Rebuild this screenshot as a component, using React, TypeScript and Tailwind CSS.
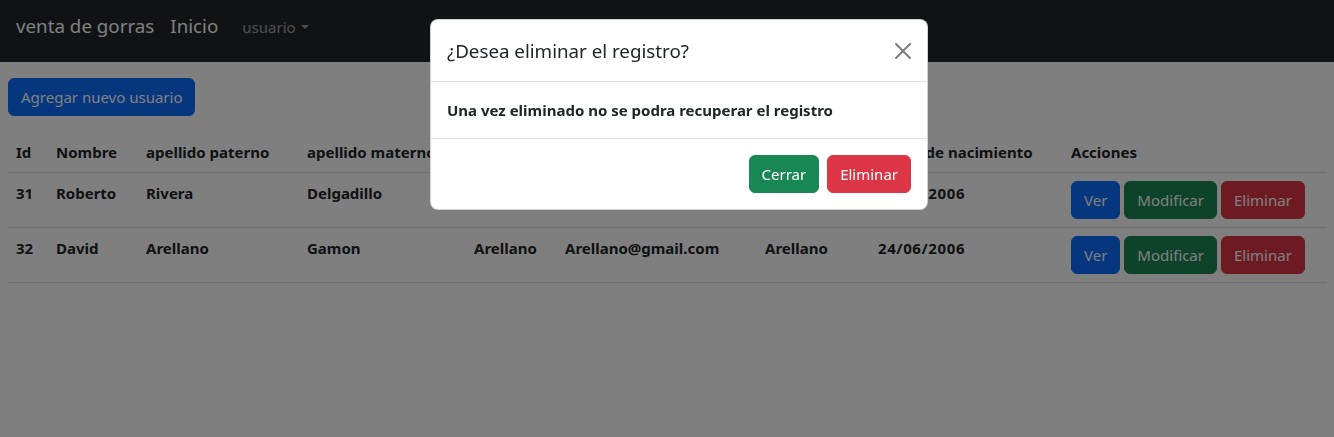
import React from "react";

const rows = [
  { id: "31", nombre: "Roberto", ap: "Rivera", am: "Delgadillo", usuario: "Rivera", correo: "Rivera@gmail.com", pass: "Rivera", fecha: "12/05/2006" },
  { id: "32", nombre: "David", ap: "Arellano", am: "Gamon", usuario: "Arellano", correo: "Arellano@gmail.com", pass: "Arellano", fecha: "24/06/2006" },
];

const headers = ["Id", "Nombre", "apellido paterno", "apellido materno", "usuario", "correo", "contraseña", "Fecha de nacimiento", "Acciones"];
const widths = [40, 90, 161, 167, 91, 200, 113, 193, 263];

export default function App() {
  return (
    <div className="relative min-h-[437px] w-full overflow-hidden bg-white text-[15px] leading-[24px] text-[#212529] font-['Noto_Sans',sans-serif]">
      <nav className="flex h-[62px] items-baseline bg-[#212529] px-4 pt-[11px]">
        <span className="mr-4 text-[18.75px] leading-[30px] text-white">venta de gorras</span>
        <span className="mr-[24px] text-[18.75px] leading-[30px] text-white">Inicio</span>
        <span className="flex items-center text-[15px] leading-[24px] text-white/55">
          usuario
          <span className="ml-[5px] inline-block h-0 w-0 border-x-[4.8px] border-t-[4.8px] border-x-transparent border-t-white/55" />
        </span>
      </nav>

      <div className="px-2">
        <button className="mt-4 rounded-[6px] border border-[#0d6efd] bg-[#0d6efd] px-3 py-[6px] text-white">Agregar nuevo usuario</button>

        <table className="mt-4 w-full table-fixed border-collapse">
          <colgroup>
            {widths.map((w, i) => (
              <col key={i} style={{ width: w }} />
            ))}
          </colgroup>
          <thead>
            <tr>
              {headers.map((h) => (
                <th key={h} className="whitespace-nowrap border-b border-[#dee2e6] p-2 text-left align-bottom font-bold">
                  {h}
                </th>
              ))}
            </tr>
          </thead>
          <tbody>
            {rows.map((r) => (
              <tr key={r.id}>
                {[r.id, r.nombre, r.ap, r.am, r.usuario, r.correo, r.pass].map((v, i) => (
                  <td key={i} className="whitespace-nowrap border-b border-[#dee2e6] p-2 align-top font-bold">
                    {v}
                  </td>
                ))}
                <td className="whitespace-nowrap border-b border-[#dee2e6] p-2 align-top font-bold tracking-[0.6px]">{r.fecha}</td>
                <td className="border-b border-[#dee2e6] p-2 align-top">
                  <div className="flex gap-1">
                    <button className="rounded-[6px] border border-[#0d6efd] bg-[#0d6efd] px-3 py-[6px] text-white">Ver</button>
                    <button className="rounded-[6px] border border-[#198754] bg-[#198754] px-3 py-[6px] text-white">Modificar</button>
                    <button className="rounded-[6px] border border-[#dc3545] bg-[#dc3545] px-3 py-[6px] text-white">Eliminar</button>
                  </div>
                </td>
              </tr>
            ))}
          </tbody>
        </table>
      </div>

      <div className="fixed inset-0 bg-black/50" />

      <div className="absolute left-[430px] top-[19px] w-[498px] rounded-lg border border-black/[.175] bg-white">
        <div className="flex items-center justify-between border-b border-[#dee2e6] px-4 py-[15.5px]">
          <h5 className="text-[18.75px] font-normal leading-[30px]">¿Desea eliminar el registro?</h5>
          <button className="flex h-4 w-4 items-center justify-center opacity-50" aria-label="Close">
            <svg viewBox="0 0 16 16" width="16" height="16" fill="#000">
              <path d="M.293.293a1 1 0 0 1 1.414 0L8 6.586 14.293.293a1 1 0 1 1 1.414 1.414L9.414 8l6.293 6.293a1 1 0 0 1-1.414 1.414L8 9.414l-6.293 6.293a1 1 0 0 1-1.414-1.414L6.586 8 .293 1.707a1 1 0 0 1 0-1.414z" />
            </svg>
          </button>
        </div>
        <div className="p-4 font-bold">Una vez eliminado no se podra recuperar el registro</div>
        <div className="flex justify-end gap-2 border-t border-[#dee2e6] px-4 py-4">
          <button className="rounded-[6px] border border-[#198754] bg-[#198754] px-3 py-[6px] text-white">Cerrar</button>
          <button className="rounded-[6px] border border-[#dc3545] bg-[#dc3545] px-3 py-[6px] text-white">Eliminar</button>
        </div>
      </div>
    </div>
  );
}
